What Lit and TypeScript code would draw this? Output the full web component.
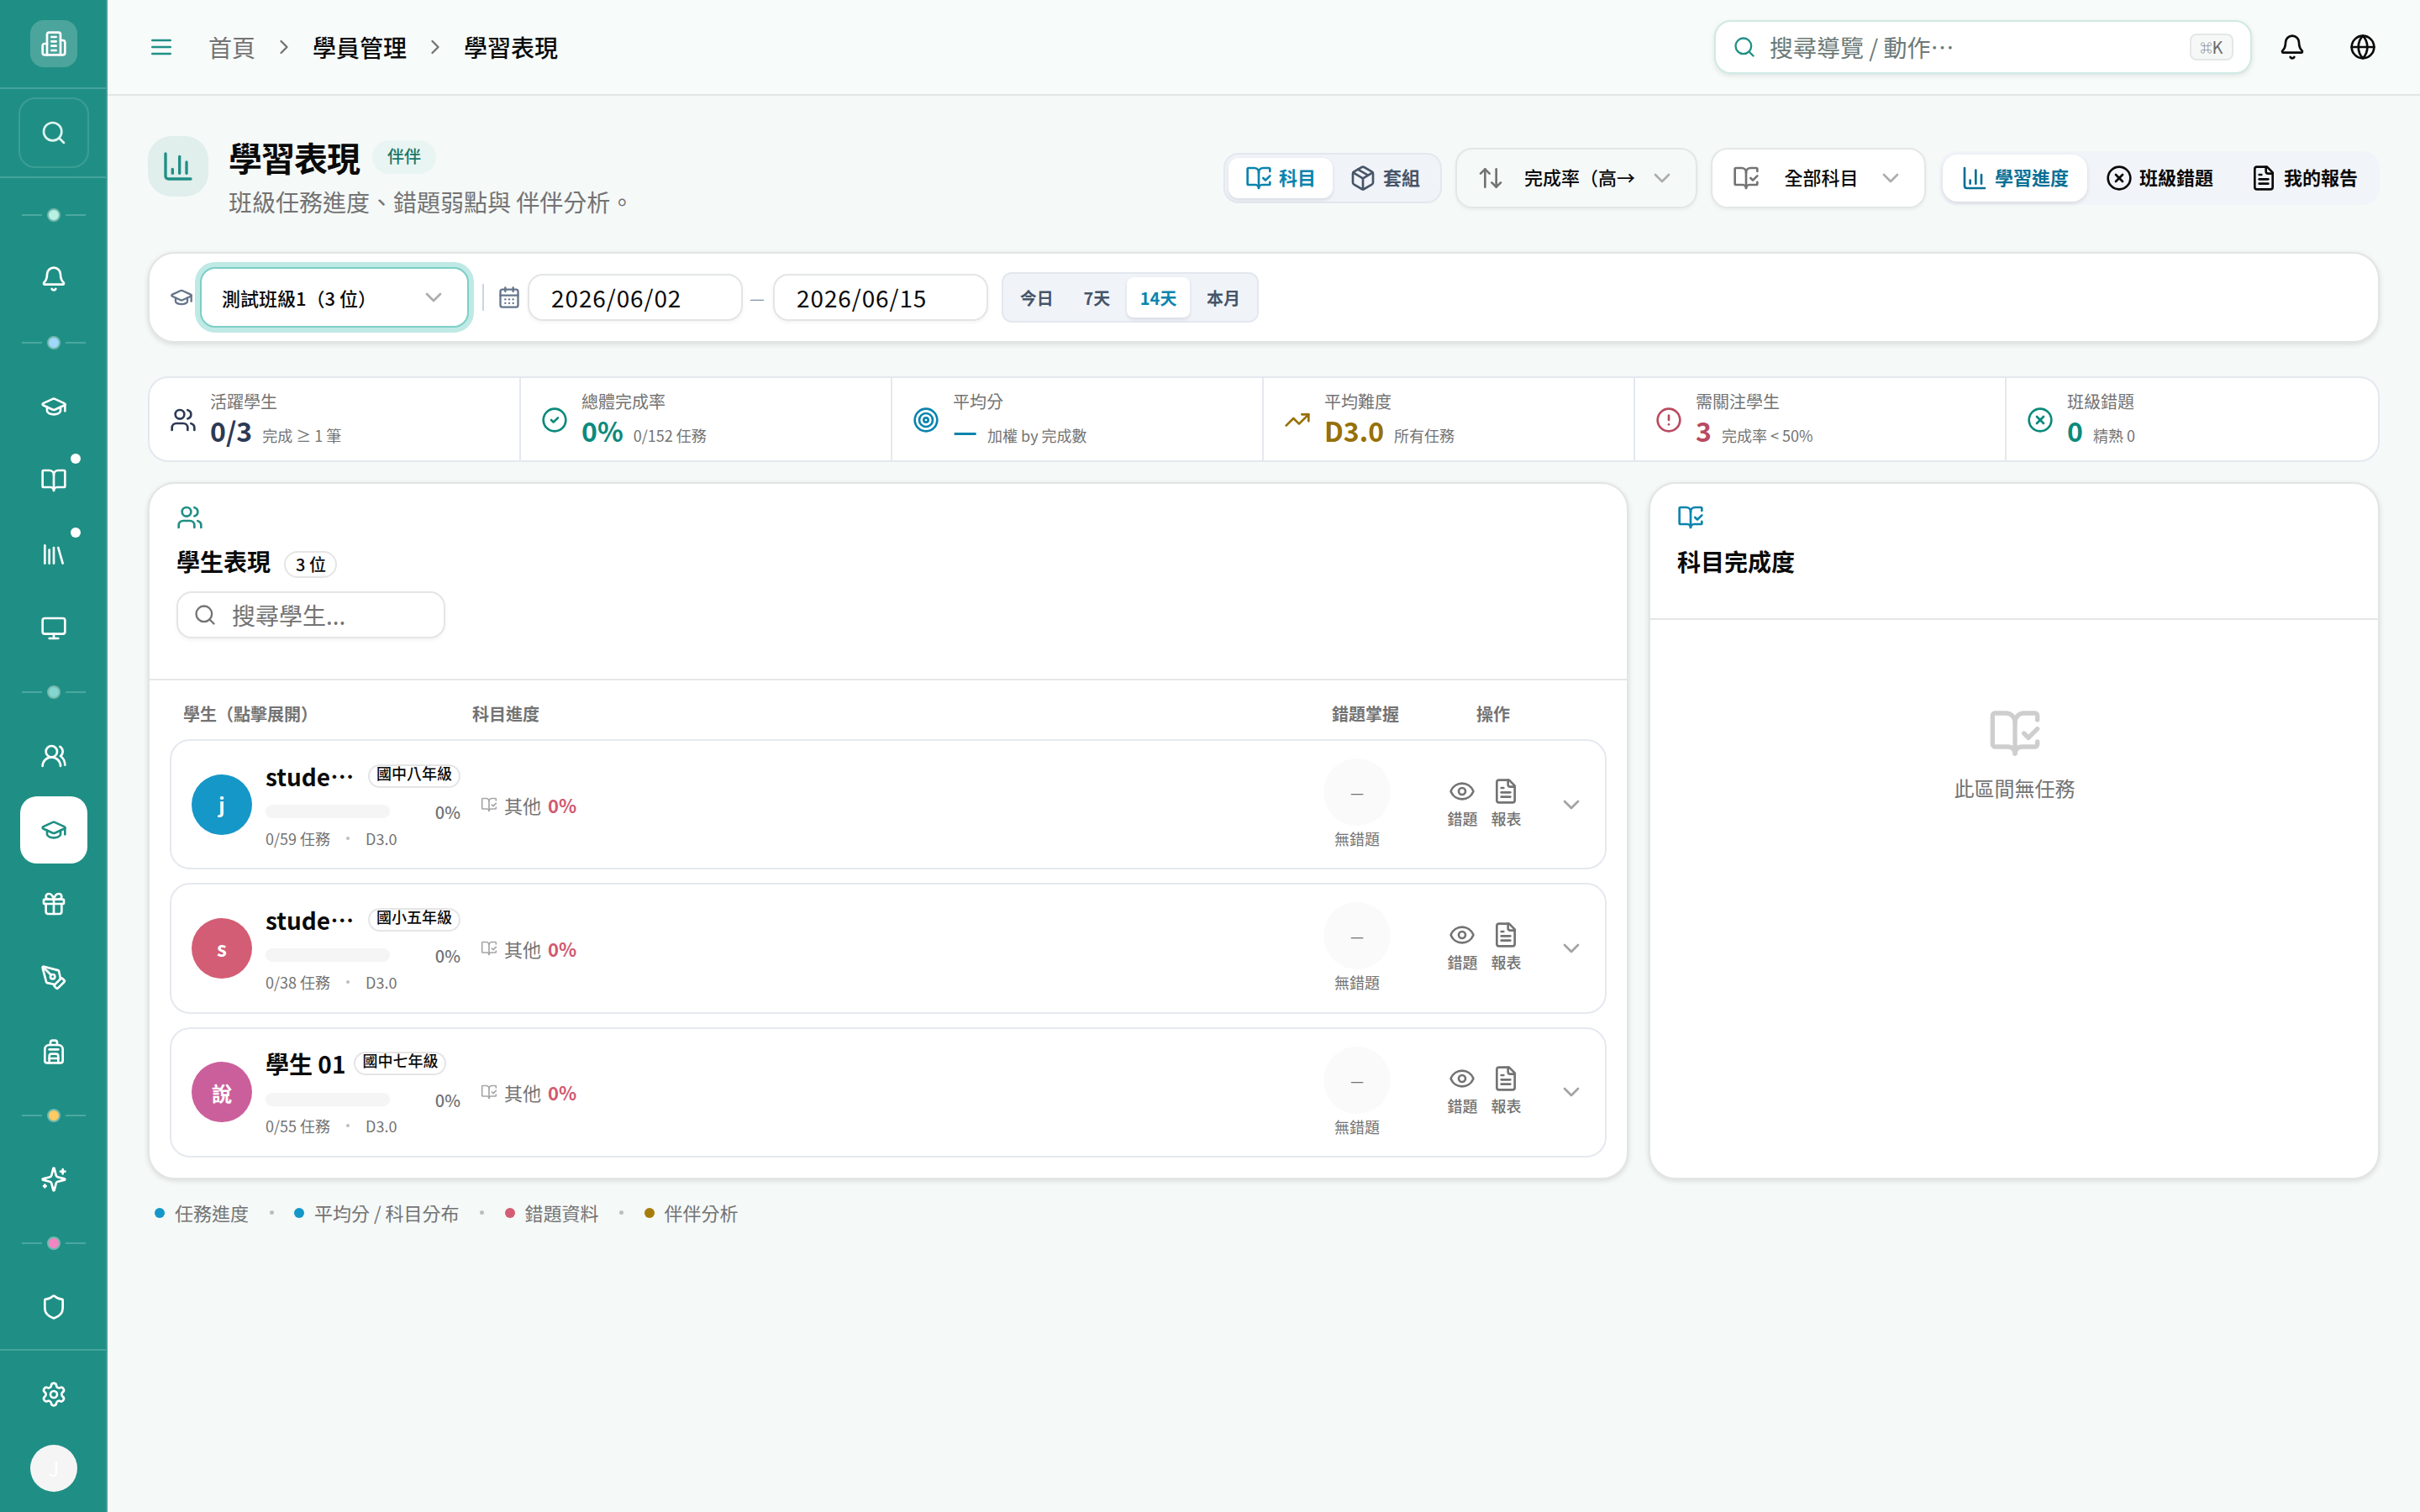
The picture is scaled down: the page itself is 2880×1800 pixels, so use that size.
import {LitElement, html, svg, css} from 'lit';
import {customElement, property, state} from 'lit/decorators.js';
import {classMap} from 'lit/directives/class-map.js';

const ICONS = {
  building: svg`<path d="M6 22V4a2 2 0 0 1 2-2h8a2 2 0 0 1 2 2v18Z"/><path d="M6 12H4a2 2 0 0 0-2 2v6a2 2 0 0 0 2 2h2"/><path d="M18 9h2a2 2 0 0 1 2 2v9a2 2 0 0 1-2 2h-2"/><path d="M10 6h4"/><path d="M10 10h4"/><path d="M10 14h4"/><path d="M10 18h4"/>`,
  search: svg`<circle cx="11" cy="11" r="8"/><path d="m21 21-4.3-4.3"/>`,
  bell: svg`<path d="M10.268 21a2 2 0 0 0 3.464 0"/><path d="M3.262 15.326A1 1 0 0 0 4 17h16a1 1 0 0 0 .74-1.673C19.41 13.956 18 12.499 18 8A6 6 0 0 0 6 8c0 4.499-1.411 5.956-2.738 7.326"/>`,
  cap: svg`<path d="M21.42 10.922a1 1 0 0 0-.019-1.838L12.83 5.18a2 2 0 0 0-1.66 0L2.6 9.08a1 1 0 0 0 0 1.832l8.57 3.908a2 2 0 0 0 1.66 0z"/><path d="M22 10v6"/><path d="M6 12.5V16a6 3 0 0 0 12 0v-3.5"/>`,
  book: svg`<path d="M12 7v14"/><path d="M3 18a1 1 0 0 1-1-1V4a1 1 0 0 1 1-1h5a4 4 0 0 1 4 4 4 4 0 0 1 4-4h5a1 1 0 0 1 1 1v13a1 1 0 0 1-1 1h-6a3 3 0 0 0-3 3 3 3 0 0 0-3-3z"/>`,
  library: svg`<path d="m16 6 4 14"/><path d="M12 6v14"/><path d="M8 8v12"/><path d="M4 4v16"/>`,
  monitor: svg`<rect width="20" height="14" x="2" y="3" rx="2"/><path d="M8 21h8"/><path d="M12 17v4"/>`,
  usersRound: svg`<path d="M18 21a8 8 0 0 0-16 0"/><circle cx="10" cy="8" r="5"/><path d="M22 20c0-3.37-2-6.5-4-8a5 5 0 0 0-.45-8.3"/>`,
  users: svg`<path d="M16 21v-2a4 4 0 0 0-4-4H6a4 4 0 0 0-4 4v2"/><circle cx="9" cy="7" r="4"/><path d="M22 21v-2a4 4 0 0 0-3-3.87"/><path d="M16 3.13a4 4 0 0 1 0 7.75"/>`,
  gift: svg`<rect x="3" y="8" width="18" height="4" rx="1"/><path d="M12 8v13"/><path d="M19 12v7a2 2 0 0 1-2 2H7a2 2 0 0 1-2-2v-7"/><path d="M7.5 8a2.5 2.5 0 0 1 0-5A4.8 8 0 0 1 12 8a4.8 8 0 0 1 4.5-5 2.5 2.5 0 0 1 0 5"/>`,
  pen: svg`<path d="M15.707 21.293a1 1 0 0 1-1.414 0l-1.586-1.586a1 1 0 0 1 0-1.414l5.586-5.586a1 1 0 0 1 1.414 0l1.586 1.586a1 1 0 0 1 0 1.414z"/><path d="m18 13-1.375-6.874a1 1 0 0 0-.746-.776L3.235 2.028a1 1 0 0 0-1.207 1.207L5.35 15.879a1 1 0 0 0 .776.746L13 18"/><path d="m2.3 2.3 7.286 7.286"/><circle cx="11" cy="11" r="2"/>`,
  backpack: svg`<path d="M4 10a4 4 0 0 1 4-4h8a4 4 0 0 1 4 4v10a2 2 0 0 1-2 2H6a2 2 0 0 1-2-2z"/><path d="M8 10h8"/><path d="M8 18h8"/><path d="M8 22v-6a2 2 0 0 1 2-2h4a2 2 0 0 1 2 2v6"/><path d="M9 6V4a2 2 0 0 1 2-2h2a2 2 0 0 1 2 2v2"/>`,
  sparkles: svg`<path d="M9.937 15.5A2 2 0 0 0 8.5 14.063l-6.135-1.582a.5.5 0 0 1 0-.962L8.5 9.936A2 2 0 0 0 9.937 8.5l1.582-6.135a.5.5 0 0 1 .963 0L14.063 8.5A2 2 0 0 0 15.5 9.937l6.135 1.581a.5.5 0 0 1 0 .964L15.5 14.063a2 2 0 0 0-1.437 1.437l-1.582 6.135a.5.5 0 0 1-.963 0z"/><path d="M20 3v4"/><path d="M22 5h-4"/><path d="M4 17v2"/><path d="M5 18H3"/>`,
  shield: svg`<path d="M20 13c0 5-3.5 7.5-7.66 8.95a1 1 0 0 1-.67-.01C7.5 20.5 4 18 4 13V6a1 1 0 0 1 1-1c2 0 4.5-1.2 6.24-2.72a1.17 1.17 0 0 1 1.52 0C14.51 3.81 17 5 19 5a1 1 0 0 1 1 1z"/>`,
  settings: svg`<path d="M9.671 4.136a2.34 2.34 0 0 1 4.659 0 2.34 2.34 0 0 0 3.319 1.915 2.34 2.34 0 0 1 2.33 4.033 2.34 2.34 0 0 0 0 3.831 2.34 2.34 0 0 1-2.33 4.033 2.34 2.34 0 0 0-3.319 1.915 2.34 2.34 0 0 1-4.659 0 2.34 2.34 0 0 0-3.32-1.915 2.34 2.34 0 0 1-2.33-4.033 2.34 2.34 0 0 0 0-3.831A2.34 2.34 0 0 1 6.35 6.051a2.34 2.34 0 0 0 3.319-1.915"/><circle cx="12" cy="12" r="3"/>`,
  menu: svg`<path d="M4 6h16"/><path d="M4 12h16"/><path d="M4 18h16"/>`,
  right: svg`<path d="m9 18 6-6-6-6"/>`,
  down: svg`<path d="m6 9 6 6 6-6"/>`,
  globe: svg`<circle cx="12" cy="12" r="10"/><path d="M12 2a14.5 14.5 0 0 0 0 20 14.5 14.5 0 0 0 0-20"/><path d="M2 12h20"/>`,
  chart: svg`<path d="M3 3v16a2 2 0 0 0 2 2h16"/><path d="M18 17V9"/><path d="M13 17V5"/><path d="M8 17v-3"/>`,
  bookCheck: svg`<path d="M12 21V7"/><path d="m16 12 2 2 4-4"/><path d="M22 6V4a1 1 0 0 0-1-1h-5a4 4 0 0 0-4 4 4 4 0 0 0-4-4H3a1 1 0 0 0-1 1v13a1 1 0 0 0 1 1h6a3 3 0 0 1 3 3 3 3 0 0 1 3-3h6a1 1 0 0 0 1-1v-1.3"/>`,
  box: svg`<path d="M11 21.73a2 2 0 0 0 2 0l7-4A2 2 0 0 0 21 16V8a2 2 0 0 0-1-1.73l-7-4a2 2 0 0 0-2 0l-7 4A2 2 0 0 0 3 8v8a2 2 0 0 0 1 1.73z"/><path d="M12 22V12"/><path d="m3.3 7 7.703 4.734a2 2 0 0 0 1.994 0L20.7 7"/><path d="m7.5 4.27 9 5.15"/>`,
  sort: svg`<path d="m21 16-4 4-4-4"/><path d="M17 20V4"/><path d="m3 8 4-4 4 4"/><path d="M7 4v16"/>`,
  circleX: svg`<circle cx="12" cy="12" r="10"/><path d="m15 9-6 6"/><path d="m9 9 6 6"/>`,
  circleCheck: svg`<circle cx="12" cy="12" r="10"/><path d="m9 12 2 2 4-4"/>`,
  circleAlert: svg`<circle cx="12" cy="12" r="10"/><path d="M12 8v4"/><path d="M12 16h.01"/>`,
  target: svg`<circle cx="12" cy="12" r="10"/><circle cx="12" cy="12" r="6"/><circle cx="12" cy="12" r="2"/>`,
  trend: svg`<path d="M16 7h6v6"/><path d="m22 7-8.5 8.5-5-5L2 17"/>`,
  file: svg`<path d="M15 2H6a2 2 0 0 0-2 2v16a2 2 0 0 0 2 2h12a2 2 0 0 0 2-2V7Z"/><path d="M14 2v4a2 2 0 0 0 2 2h4"/><path d="M10 9H8"/><path d="M16 13H8"/><path d="M16 17H8"/>`,
  calendar: svg`<path d="M8 2v4"/><path d="M16 2v4"/><rect width="18" height="18" x="3" y="4" rx="2"/><path d="M3 10h18"/><path d="M8 14h.01"/><path d="M12 14h.01"/><path d="M16 14h.01"/><path d="M8 18h.01"/><path d="M12 18h.01"/><path d="M16 18h.01"/>`,
  eye: svg`<path d="M2.062 12.348a1 1 0 0 1 0-.696 10.75 10.75 0 0 1 19.876 0 1 1 0 0 1 0 .696 10.75 10.75 0 0 1-19.876 0"/><circle cx="12" cy="12" r="3"/>`,
};

type IconName = keyof typeof ICONS;

const icon = (name: IconName, size = 32) => html`
  <svg class="icon" width=${size} height=${size} viewBox="0 0 24 24" fill="none"
    stroke="currentColor" stroke-width="2" stroke-linecap="round" stroke-linejoin="round">${ICONS[name]}</svg>
`;

const iconStyles = css`
  *, *::before, *::after {
    box-sizing: border-box;
  }
  .icon {
    display: block;
    flex: none;
  }
`;

interface NavItem {
  icon?: IconName;
  sep?: string;
  dot?: boolean;
  active?: boolean;
}

const NAV: NavItem[] = [
  {sep: 'mint'},
  {icon: 'bell'},
  {sep: 'sky'},
  {icon: 'cap'},
  {icon: 'book', dot: true},
  {icon: 'library', dot: true},
  {icon: 'monitor'},
  {sep: 'teal'},
  {icon: 'usersRound'},
  {icon: 'cap', active: true},
  {icon: 'gift'},
  {icon: 'pen'},
  {icon: 'backpack'},
  {sep: 'amber'},
  {icon: 'sparkles'},
  {sep: 'pink'},
  {icon: 'shield'},
];

@customElement('side-nav')
export class SideNav extends LitElement {
  static styles = [iconStyles, css`
    :host {
      display: flex;
      flex-direction: column;
      flex: none;
      box-sizing: border-box;
      width: 128px;
      height: 1800px;
      background: #1f8f85;
      border-right: 2px solid #459f97;
      color: #fff;
    }
    .brand {
      height: 106px;
      padding-top: 24px;
      border-bottom: 2px solid #45a39b;
    }
    .logo {
      display: grid;
      place-items: center;
      width: 56px;
      height: 56px;
      margin-left: 36px;
      border-radius: 16px;
      background: #4ca59d;
    }
    .finder {
      height: 106px;
      padding: 10px 0 0 22px;
      border-bottom: 2px solid #45a39b;
    }
    .finder-box {
      display: grid;
      place-items: center;
      width: 84px;
      height: 84px;
      border: 2px solid #3c9d94;
      border-radius: 20px;
      color: #e0f5f1;
    }
    nav {
      flex: 1;
      display: flex;
      flex-direction: column;
      padding: 8px 0 0 24px;
    }
    .item {
      position: relative;
      display: grid;
      place-items: center;
      width: 80px;
      height: 80px;
      border-radius: 20px;
    }
    .item + .item {
      margin-top: 8px;
    }
    .item.active {
      background: #fff;
      color: #1f8f85;
    }
    .badge {
      position: absolute;
      top: 8px;
      right: 8px;
      width: 12px;
      height: 12px;
      border-radius: 50%;
      background: #fff;
    }
    .sep {
      display: flex;
      align-items: center;
      justify-content: center;
      gap: 6px;
      width: 80px;
      height: 72px;
    }
    .sep::before, .sep::after {
      content: '';
      width: 24px;
      height: 2px;
      background: #4da79f;
    }
    .sep span {
      width: 16px;
      height: 16px;
      border-radius: 50%;
      border: 2px solid #74b8b0;
    }
    .mint span { background: #b8f1e1; }
    .sky span { background: #9fd8fb; }
    .teal span { background: #84d5ce; }
    .amber span { background: #fecb61; }
    .pink span { background: #f585c1; }
    footer {
      display: flex;
      flex-direction: column;
      align-items: center;
      gap: 20px;
      height: 194px;
      padding: 12px 0 0 2px;
      border-top: 2px solid #45a39b;
    }
    .user {
      display: grid;
      place-items: center;
      width: 56px;
      height: 56px;
      border-radius: 50%;
      background: #f5f5f5;
      color: #fff;
      font-size: 24px;
      line-height: 1;
    }
  `];

  render() {
    return html`
      <div class="brand"><div class="logo">${icon('building')}</div></div>
      <div class="finder"><div class="finder-box">${icon('search')}</div></div>
      <nav>
        ${NAV.map(item => item.sep
          ? html`<div class="sep ${item.sep}"><span></span></div>`
          : html`
            <div class=${classMap({item: true, active: !!item.active})}>
              ${icon(item.icon!)}
              ${item.dot ? html`<span class="badge"></span>` : ''}
            </div>
          `)}
      </nav>
      <footer>
        <div class="item">${icon('settings')}</div>
        <div class="user">J</div>
      </footer>
    `;
  }
}

@customElement('top-bar')
export class TopBar extends LitElement {
  static styles = [iconStyles, css`
    :host {
      display: flex;
      align-items: center;
      box-sizing: border-box;
      height: 114px;
      padding: 0 32px 0 48px;
      background: #f7fbfa;
      border-bottom: 2px solid #e1e7e6;
      font-size: 28px;
      line-height: 40px;
    }
    .menu {
      color: #1f8f85;
      margin-right: 40px;
    }
    .crumbs {
      display: flex;
      align-items: center;
      gap: 20px;
      color: #737373;
    }
    .crumbs b {
      font-weight: 500;
      color: #0a0a0a;
    }
    .search {
      display: flex;
      align-items: center;
      gap: 16px;
      width: 640px;
      height: 64px;
      margin-left: auto;
      padding: 0 20px;
      background: #fff;
      border: 2px solid #cfeae3;
      border-radius: 20px;
      box-shadow: 0 2px 6px rgba(0, 0, 0, .1);
      color: #6c7a77;
    }
    .search .icon {
      color: #1f8f85;
    }
    kbd {
      display: flex;
      align-items: center;
      justify-content: center;
      width: 52px;
      height: 32px;
      margin-left: auto;
      border: 2px solid #e3e7e6;
      border-radius: 8px;
      background: #f6f8f7;
      color: #6b6b6b;
      font: 400 20px/28px "Noto Sans CJK TC", sans-serif;
    }
    kbd small {
      font-size: 14px;
      font-weight: 500;
      line-height: 28px;
    }
    .round {
      display: grid;
      place-items: center;
      width: 72px;
      height: 72px;
      margin-left: 12px;
      color: #0a0a0a;
    }
  `];

  render() {
    return html`
      <div class="menu">${icon('menu')}</div>
      <div class="crumbs">
        <span>首頁</span>
        ${icon('right', 28)}
        <b>學員管理</b>
        ${icon('right', 28)}
        <b>學習表現</b>
      </div>
      <div class="search">
        ${icon('search', 28)}
        <span>搜尋導覽 / 動作…</span>
        <kbd><small>⌘</small>K</kbd>
      </div>
      <div class="round">${icon('bell')}</div>
      <div class="round">${icon('globe')}</div>
    `;
  }
}

interface Stat {
  icon: IconName;
  tone: string;
  label: string;
  value: string;
  note: string;
}

const STATS: Stat[] = [
  {icon: 'users', tone: 'navy', label: '活躍學生', value: '0/3', note: '完成 ≥ 1 筆'},
  {icon: 'circleCheck', tone: 'green', label: '總體完成率', value: '0%', note: '0/152 任務'},
  {icon: 'target', tone: 'blue', label: '平均分', value: '—', note: '加權 by 完成數'},
  {icon: 'trend', tone: 'gold', label: '平均難度', value: 'D3.0', note: '所有任務'},
  {icon: 'circleAlert', tone: 'red', label: '需關注學生', value: '3', note: '完成率 < 50%'},
  {icon: 'circleX', tone: 'green', label: '班級錯題', value: '0', note: '精熟 0'},
];

@customElement('stat-strip')
export class StatStrip extends LitElement {
  static styles = [iconStyles, css`
    :host {
      display: grid;
      grid-template-columns: repeat(6, 1fr);
      box-sizing: border-box;
      height: 102px;
      border: 2px solid #e4e8ef;
      border-radius: 24px;
      background: #fff;
      overflow: hidden;
    }
    .cell {
      display: flex;
      align-items: center;
      gap: 16px;
      padding: 0 0 2px 24px;
      border-right: 2px solid #e4e8ef;
    }
    .cell:last-child {
      border-right: none;
    }
    .cell .icon {
      margin-top: 4px;
    }
    .label {
      font-size: 20px;
      line-height: 28px;
      color: #737373;
    }
    .line {
      display: flex;
      align-items: baseline;
      gap: 12px;
      height: 40px;
      line-height: 40px;
    }
    .value {
      font-size: 32px;
      font-weight: 700;
    }
    .note {
      font-size: 18px;
      color: #737373;
    }
    .navy { color: #2c3a55; }
    .green { color: #0b8a7c; }
    .blue { color: #0a84ad; }
    .gold { color: #977008; }
    .red { color: #b94a60; }
  `];

  render() {
    return STATS.map(s => html`
      <div class="cell ${s.tone}">
        ${icon(s.icon)}
        <div>
          <div class="label">${s.label}</div>
          <div class="line">
            <span class="value">${s.value}</span>
            <span class="note">${s.note}</span>
          </div>
        </div>
      </div>
    `);
  }
}

interface Student {
  initial: string;
  color: string;
  name: string;
  cut?: boolean;
  grade: string;
  tasks: string;
}

@customElement('student-row')
export class StudentRow extends LitElement {
  static styles = [iconStyles, css`
    :host {
      display: flex;
      align-items: center;
      box-sizing: border-box;
      height: 155.33px;
      padding: 0 24px;
      border: 2px solid #e5e8ee;
      border-radius: 24px;
      background: #fff;
      color: #737373;
    }
    .avatar {
      display: grid;
      place-items: center;
      flex: none;
      width: 72px;
      height: 72px;
      margin-right: 16px;
      border-radius: 50%;
      color: #fff;
      font-size: 24px;
      font-weight: 700;
    }
    .info {
      width: 232px;
      margin-right: 24px;
    }
    .top {
      display: flex;
      align-items: center;
      gap: 10px;
      height: 40px;
      margin-bottom: 6px;
    }
    .name {
      font-size: 28px;
      font-weight: 700;
      line-height: 40px;
      color: #0a0a0a;
      white-space: nowrap;
    }
    .name.cut {
      display: flex;
      width: 112px;
    }
    .grade {
      height: 28px;
      padding: 0 8px;
      border: 2px solid #e5e5e5;
      border-radius: 14px;
      font-size: 18px;
      font-weight: 500;
      line-height: 17px;
      color: #0a0a0a;
      white-space: nowrap;
    }
    .progress {
      display: flex;
      align-items: center;
      justify-content: space-between;
      height: 32px;
      padding-top: 1px;
      font-size: 20px;
      font-weight: 500;
      line-height: 32px;
    }
    .percent {
      padding-top: 2px;
    }
    .track {
      width: 148px;
      height: 16px;
      border-radius: 8px;
      background: #f5f5f5;
    }
    .meta {
      display: flex;
      align-items: center;
      gap: 19px;
      margin-top: 2px;
      font-size: 18px;
      line-height: 28px;
    }
    .meta i {
      width: 4px;
      height: 4px;
      border-radius: 50%;
      background: #bdbdbd;
    }
    .subject {
      flex: 1;
      display: flex;
      align-items: center;
      gap: 8px;
      font-size: 22px;
      line-height: 32px;
    }
    .subject .icon {
      color: #a6a6a6;
    }
    .subject b {
      font-weight: 700;
      color: #d05a70;
    }
    .wrong {
      display: flex;
      flex-direction: column;
      align-items: center;
      gap: 1px;
      width: 100px;
      margin-right: 53px;
      font-size: 18px;
      line-height: 28px;
    }
    .ring {
      display: grid;
      place-items: center;
      width: 80px;
      height: 80px;
      border-radius: 50%;
      background: #fafafa;
    }
    .actions {
      display: flex;
      gap: 8px;
      margin-right: 40px;
      padding-bottom: 4px;
      font-size: 18px;
      font-weight: 500;
      line-height: 24px;
    }
    .action {
      display: flex;
      flex-direction: column;
      align-items: center;
      gap: 4px;
      width: 44px;
    }
    .action span {
      padding-left: 1px;
    }
    .toggle {
      color: #a3a3a3;
    }
  `];

  @property({attribute: false}) student!: Student;

  render() {
    const s = this.student;
    return html`
      <div class="avatar" style="background: ${s.color}">${s.initial}</div>
      <div class="info">
        <div class="top">
          <span class=${classMap({name: true, cut: !!s.cut})}>${s.cut
            ? html`<span>${s.name}</span><span lang="zh-TW">…</span>`
            : s.name}</span>
          <span class="grade">${s.grade}</span>
        </div>
        <div class="progress"><span class="track"></span><span class="percent">0%</span></div>
        <div class="meta"><span>${s.tasks} 任務</span><i></i><span>D3.0</span></div>
      </div>
      <div class="subject">${icon('bookCheck', 20)}<span>其他</span><b>0%</b></div>
      <div class="wrong">
        <div class="ring">—</div>
        <span>無錯題</span>
      </div>
      <div class="actions">
        <div class="action">${icon('eye')}<span>錯題</span></div>
        <div class="action">${icon('file')}<span>報表</span></div>
      </div>
      <div class="toggle">${icon('down')}</div>
    `;
  }
}

@customElement('app-root')
export class AppRoot extends LitElement {
  static styles = [iconStyles, css`
    :host {
      display: flex;
      width: 2880px;
      height: 1800px;
      overflow: hidden;
      background: #f5f9f8;
      color: #0a0a0a;
      font-family: "Noto Sans CJK TC", "Noto Sans", sans-serif;
    }
    .page {
      flex: 1;
      min-width: 0;
    }
    main {
      padding: 48px 48px 0;
    }
    .head {
      display: flex;
      height: 100px;
      margin-bottom: 38px;
    }
    .head-icon {
      display: grid;
      place-items: center;
      width: 72px;
      height: 72px;
      margin-right: 24px;
      border-radius: 28px;
      background: #e0eeec;
      color: #1f8f85;
    }
    .title {
      display: flex;
      align-items: center;
      gap: 15px;
      height: 50px;
      margin-bottom: 8px;
    }
    h1 {
      margin: 0;
      font-size: 40px;
      line-height: 50px;
      font-weight: 700;
      letter-spacing: -1px;
    }
    .tag {
      height: 40px;
      padding: 0 18px;
      border-radius: 20px;
      background: #e9f5f2;
      color: #1c7568;
      font-size: 20px;
      font-weight: 500;
      line-height: 38px;
    }
    .sub {
      font-size: 28px;
      line-height: 40px;
      color: #737373;
    }
    .tools {
      display: flex;
      align-items: center;
      gap: 16px;
      margin-left: auto;
      font-size: 22px;
      line-height: 32px;
    }
    .segment {
      display: flex;
      height: 60px;
      padding: 4px;
      border: 2px solid #e3e8ee;
      border-radius: 18px;
      background: #f0f4f9;
      color: #475569;
      font-weight: 700;
    }
    .segment span {
      display: flex;
      align-items: center;
      gap: 8px;
      padding: 0 20px;
      border-radius: 12px;
    }
    .segment .on {
      background: #fff;
      color: #0a84ad;
      box-shadow: 0 2px 4px rgba(15, 23, 42, .12);
    }
    .segment.small {
      gap: 4px;
      margin-left: 16px;
      border-radius: 12px;
      font-size: 20px;
    }
    .segment.small span {
      padding: 0 15.8px;
      border-radius: 8px;
    }
    .tools b {
      padding-bottom: 4px;
      font-weight: inherit;
    }
    .select {
      display: flex;
      align-items: center;
      justify-content: space-between;
      height: 72px;
      padding: 0 24px;
      border: 2px solid #e3e7e6;
      border-radius: 20px;
      box-shadow: 0 2px 4px rgba(0, 0, 0, .05);
      font-size: 22px;
      font-weight: 500;
      line-height: 32px;
    }
    .select > .icon {
      color: #737373;
    }
    .select > .icon:last-child {
      color: #adadad;
    }
    .sort {
      width: 288px;
    }
    .sort b {
      margin-left: 8px;
    }
    .subject {
      width: 256px;
      background: #fff;
    }
    .subject b {
      margin-left: 7px;
    }
    .tabs {
      display: flex;
      height: 64px;
      padding: 4px;
      border-radius: 20px;
      background: #f1f5f9;
      font-weight: 700;
    }
    .tabs span {
      display: flex;
      align-items: center;
      gap: 8px;
      width: 172px;
      padding: 0 22px;
      border-radius: 18px;
      white-space: nowrap;
    }
    .tabs .on {
      background: #fff;
      color: #086f96;
      box-shadow: 0 2px 5px rgba(0, 0, 0, .12);
    }
    .card {
      background: #fff;
      border: 2px solid #e3e5e5;
      border-radius: 32px;
      box-shadow: 0 2px 6px rgba(0, 0, 0, .12);
    }
    .filters {
      display: flex;
      align-items: center;
      height: 108px;
      margin-bottom: 40px;
      padding-left: 24px;
      color: #64748b;
    }
    .class-select {
      width: 320px;
      margin: 0 16px 0 8px;
      border-color: #7ccfc5;
      border-radius: 18px;
      background: #fff;
      box-shadow: 0 0 0 6px #bfe9e5;
      color: #0a0a0a;
    }
    .rule {
      width: 2px;
      height: 32px;
      margin-right: 16px;
      background: #cbd5e1;
    }
    .date {
      width: 256px;
      height: 56px;
      margin-left: 8px;
      padding-left: 26px;
      border: 2px solid #e3e5e5;
      border-radius: 18px;
      box-shadow: 0 2px 4px rgba(0, 0, 0, .05);
      font-size: 28px;
      line-height: 52px;
      letter-spacing: .9px;
      color: #0a0a0a;
    }
    .dash {
      width: 20px;
      margin-left: 8px;
      font-size: 20px;
      color: #8494ab;
    }
    stat-strip {
      margin-bottom: 24px;
    }
    .columns {
      display: grid;
      grid-template-columns: 1762px 1fr;
      gap: 24px;
      height: 830px;
    }
    .card-head {
      padding: 24px 32px 0;
      border-bottom: 2px solid #e5e6e6;
    }
    .left .card-head {
      height: 234px;
      color: #1f8f85;
    }
    .right .card-head {
      height: 162px;
      color: #0a84ad;
    }
    .card-title {
      display: flex;
      gap: 16px;
      margin: 16px 0;
      height: 40px;
      color: #0a0a0a;
    }
    h2 {
      margin: 0;
      font-size: 28px;
      line-height: 40px;
      font-weight: 700;
    }
    .count {
      height: 32px;
      margin-top: 8px;
      padding: 0 11px 0 12px;
      border: 2px solid #e5e5e5;
      border-radius: 16px;
      font-size: 20px;
      font-weight: 500;
      line-height: 28px;
    }
    .find {
      display: flex;
      align-items: center;
      gap: 18px;
      width: 320px;
      height: 56px;
      padding-left: 18px;
      border: 2px solid #e5e5e5;
      border-radius: 18px;
      box-shadow: 0 2px 4px rgba(0, 0, 0, .05);
      color: #737373;
      font-size: 28px;
    }
    .thead {
      display: grid;
      grid-template-columns: 344px 1fr 172px 139px;
      padding: 26px 40px 16px;
      font-size: 20px;
      font-weight: 700;
      line-height: 28px;
      color: #737373;
    }
    .rows {
      display: flex;
      flex-direction: column;
      gap: 16px;
      padding: 0 24px;
    }
    .empty {
      display: flex;
      flex-direction: column;
      align-items: center;
      gap: 16px;
      padding: 103px 0 0 1px;
      color: #737373;
      font-size: 24px;
      line-height: 34px;
    }
    .empty .icon {
      color: #cecece;
    }
    .legend {
      display: flex;
      align-items: center;
      gap: 12px;
      padding: 23px 8px 0;
      font-size: 22px;
      line-height: 34px;
      color: #737373;
    }
    .legend i {
      width: 12px;
      height: 12px;
      border-radius: 50%;
    }
    .legend span {
      margin-top: -1px;
    }
    .legend em {
      width: 5px;
      height: 5px;
      margin: 0 12.5px;
      border-radius: 50%;
      background: #bcbfbe;
    }
    .c-blue { background: #1597c8; }
    .c-red { background: #d35d74; }
    .c-gold { background: #a67c0a; }
  `];

  @state() private _ranges = ['今日', '7天', '14天', '本月'];
  @state() private _range = '14天';

  private _students: Student[] = [
    {initial: 'j', color: '#1597c8', name: 'stude', cut: true, grade: '國中八年級', tasks: '0/59'},
    {initial: 's', color: '#d35d74', name: 'stude', cut: true, grade: '國小五年級', tasks: '0/38'},
    {initial: '說', color: '#cb5f9b', name: '學生 01', grade: '國中七年級', tasks: '0/55'},
  ];

  private _renderHead() {
    return html`
      <div class="head">
        <div class="head-icon">${icon('chart', 40)}</div>
        <div>
          <div class="title"><h1>學習表現</h1><span class="tag">伴伴</span></div>
          <div class="sub">班級任務進度、錯題弱點與 伴伴分析。</div>
        </div>
        <div class="tools">
          <div class="segment">
            <span class="on">${icon('bookCheck')}<b>科目</b></span>
            <span>${icon('box')}<b>套組</b></span>
          </div>
          <div class="select sort">${icon('sort')}<b>完成率（高→</b>${icon('down')}</div>
          <div class="select subject">${icon('bookCheck')}<b>全部科目</b>${icon('down')}</div>
          <div class="tabs">
            <span class="on">${icon('chart')}<b>學習進度</b></span>
            <span>${icon('circleX')}<b>班級錯題</b></span>
            <span>${icon('file')}<b>我的報告</b></span>
          </div>
        </div>
      </div>
    `;
  }

  private _renderFilters() {
    return html`
      <div class="card filters">
        ${icon('cap', 28)}
        <div class="select class-select"><span>測試班級1（3 位）</span>${icon('down')}</div>
        <div class="rule"></div>
        ${icon('calendar', 28)}
        <div class="date">2026/06/02</div>
        <div class="dash">—</div>
        <div class="date">2026/06/15</div>
        <div class="segment small">
          ${this._ranges.map(r => html`
            <span class=${classMap({on: r === this._range})} @click=${() => { this._range = r; }}>${r}</span>
          `)}
        </div>
      </div>
    `;
  }

  render() {
    return html`
      <side-nav></side-nav>
      <div class="page">
        <top-bar></top-bar>
        <main>
          ${this._renderHead()}
          ${this._renderFilters()}
          <stat-strip></stat-strip>
          <div class="columns">
            <section class="card left">
              <div class="card-head">
                ${icon('users')}
                <div class="card-title"><h2>學生表現</h2><span class="count">3 位</span></div>
                <div class="find">${icon('search', 28)}<span>搜尋學生...</span></div>
              </div>
              <div class="thead">
                <span>學生（點擊展開）</span><span>科目進度</span><span>錯題掌握</span><span>操作</span>
              </div>
              <div class="rows">
                ${this._students.map(s => html`<student-row .student=${s}></student-row>`)}
              </div>
            </section>
            <section class="card right">
              <div class="card-head">
                ${icon('bookCheck')}
                <div class="card-title"><h2>科目完成度</h2></div>
              </div>
              <div class="empty">${icon('bookCheck', 64)}<span>此區間無任務</span></div>
            </section>
          </div>
          <div class="legend">
            <i class="c-blue"></i><span>任務進度</span><em></em>
            <i class="c-blue"></i><span>平均分 / 科目分布</span><em></em>
            <i class="c-red"></i><span>錯題資料</span><em></em>
            <i class="c-gold"></i><span>伴伴分析</span>
          </div>
        </main>
      </div>
    `;
  }
}
